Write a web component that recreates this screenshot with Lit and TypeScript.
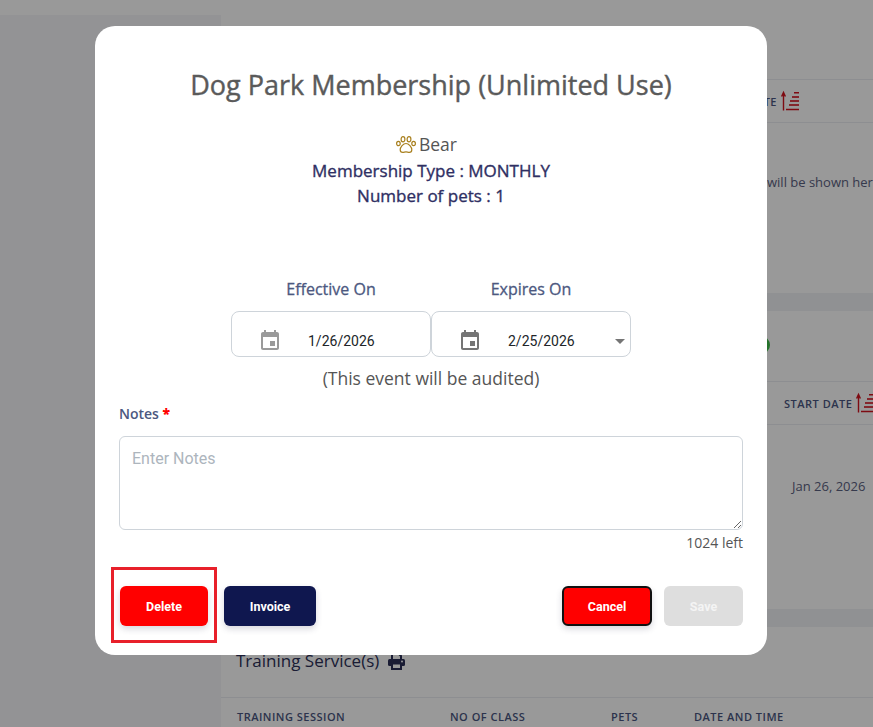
import { LitElement, html, css } from 'lit';
import { customElement } from 'lit/decorators.js';

const calendarPath =
  'M17 12h-5v5h5v-5zM16 1v2H8V1H6v2H5c-1.11 0-1.99.9-1.99 2L3 19c0 1.1.89 2 2 2h14c1.1 0 2-.9 2-2V5c0-1.1-.9-2-2-2h-1V1h-2zm3 18H5V8h14v11z';

const sortIcon = html`
  <svg class="sort" viewBox="0 0 18 19" width="18" height="19" fill="none" stroke="#d3131f">
    <path d="M1.5 18.500V1M-.4 4.500 1.500.5l1.900 4" stroke-width="1.400" />
    <path d="M12 .7h5M4 17.500h13" stroke-width="1.400" />
    <path d="M10 5h7M8 9h9M7 13h10" stroke-width="1.800" stroke-opacity=".8" />
  </svg>
`;

@customElement('app-root')
export class AppRoot extends LitElement {
  static styles = css`
    :host {
      display: block;
      position: relative;
      width: 873px;
      height: 727px;
      overflow: hidden;
      background: #fff;
      font-family: 'Open Sans', sans-serif;
    }

    /* page behind the dialog */
    .page {
      display: flex;
      height: 712px;
      margin-top: 15px;
    }

    .sidebar {
      width: 221px;
      flex: none;
      background: #f6f6f8;
    }

    .main {
      flex: 1;
      min-width: 0;
      background: #f0f2f5;
      overflow: hidden;
    }

    .card {
      background: #fff;
    }

    .card-one {
      height: 278px;
      padding-top: 64px;
      box-sizing: border-box;
    }

    .card-two {
      height: 298px;
      margin-top: 18px;
      padding-top: 70px;
      box-sizing: border-box;
      position: relative;
    }

    .card-three {
      height: 120px;
      margin-top: 18px;
    }

    .head-row {
      display: flex;
      align-items: center;
      height: 42px;
      border-top: 1px solid #ebedf2;
      border-bottom: 1px solid #ebedf2;
      background: #fff;
      font-size: 11px;
      font-weight: 600;
      letter-spacing: 0.5px;
      color: #4a5680;
      white-space: nowrap;
    }

    .head-row.one {
      justify-content: flex-end;
      padding-right: 73px;
      gap: 5px;
    }

    .head-row.two {
      padding-left: 563px;
      gap: 5px;
    }

    .sort {
      flex: none;
      overflow: visible;
    }

    .empty {
      margin: 50px 0 0 546px;
      font-size: 13px;
      color: #5b6180;
      white-space: nowrap;
    }

    .status-dot {
      position: absolute;
      left: 531px;
      top: 25px;
      width: 18px;
      height: 18px;
      border-radius: 50%;
      background: #3fbf4a;
    }

    .cell-date {
      margin: 52px 0 0 571px;
      font-size: 13px;
      color: #5b6180;
      white-space: nowrap;
    }

    .section-title {
      display: flex;
      align-items: center;
      gap: 9px;
      height: 71px;
      box-sizing: border-box;
      padding: 0 0 4px 15px;
      border-bottom: 1px solid #ebedf2;
      font-size: 17px;
      color: #2c3058;
    }

    .section-title svg {
      margin-top: 3px;
    }

    .train-row {
      display: flex;
      align-items: center;
      height: 37px;
      padding-left: 16px;
      font-size: 11px;
      font-weight: 600;
      letter-spacing: 0.5px;
      color: #4a5680;
      white-space: nowrap;
    }

    .train-row span:nth-child(1) {
      width: 213px;
    }

    .train-row span:nth-child(2) {
      width: 161px;
    }

    .train-row span:nth-child(3) {
      width: 83px;
    }

    /* dialog */
    .backdrop {
      position: absolute;
      inset: 0;
      background: rgba(0, 0, 0, 0.4);
    }

    .modal {
      position: absolute;
      left: 95px;
      top: 26px;
      width: 672px;
      height: 629px;
      box-sizing: border-box;
      padding: 39px 24px 0;
      background: #fff;
      border-radius: 20px;
    }

    h2 {
      margin: 0;
      font-size: 27px;
      line-height: 40px;
      font-weight: 400;
      -webkit-text-stroke: 0.4px #5a5a5a;
      color: #5a5a5a;
      text-align: center;
    }

    .pet {
      display: flex;
      justify-content: center;
      align-items: center;
      gap: 3px;
      margin-top: 26px;
      height: 26px;
      padding-right: 9px;
      font-size: 17.500px;
      color: #555;
    }

    .info {
      font-size: 17px;
      line-height: 25px;
      font-weight: 400;
      -webkit-text-stroke: 0.35px #2f2f63;
      color: #2f2f63;
      text-align: center;
    }

    .info.first {
      margin-top: 1px;
    }

    .dates {
      display: flex;
      justify-content: center;
      margin-top: 70px;
    }

    .date-field {
      width: 200px;
    }

    .date-label {
      font-size: 16px;
      line-height: 22px;
      font-weight: 400;
      -webkit-text-stroke: 0.3px #4c5880;
      color: #4c5880;
      text-align: center;
      margin-bottom: 11px;
    }

    .date-box {
      display: flex;
      align-items: flex-end;
      position: relative;
      height: 46px;
      box-sizing: border-box;
      padding: 0 0 3px 26px;
      border: 1px solid #ced4da;
      border-radius: 8px;
      font-family: Roboto, sans-serif;
      font-size: 14px;
      color: #212529;
    }

    .date-box span {
      margin: 0 0 4px 26px;
    }

    .caret {
      position: absolute;
      right: 5px;
      top: 27px;
      width: 0;
      height: 0;
      border-left: 5.500px solid transparent;
      border-right: 5.500px solid transparent;
      border-top: 5px solid #757575;
    }

    .audit {
      margin-top: 10px;
      font-size: 17.500px;
      line-height: 22px;
      color: #555;
      text-align: center;
    }

    .notes-label {
      margin-top: 15px;
      font-size: 14px;
      line-height: 20px;
      font-weight: 600;
      color: #4c5880;
    }

    .notes-label b {
      color: #f00;
    }

    textarea {
      display: block;
      box-sizing: border-box;
      width: 624px;
      height: 94px;
      margin-top: 12px;
      padding: 12px 12px;
      border: 1px solid #ced4da;
      border-radius: 6px;
      outline: none;
      font-family: Roboto, sans-serif;
      font-size: 16px;
    }

    textarea::placeholder {
      color: #adb5bd;
    }

    .left {
      margin-top: 3px;
      font-size: 14px;
      line-height: 20px;
      color: #555;
      text-align: right;
    }

    .actions {
      display: flex;
      align-items: center;
      margin-top: 33px;
      padding-left: 1px;
    }

    .actions button {
      height: 40px;
      box-sizing: border-box;
      border: none;
      border-radius: 6px;
      font-family: Roboto, sans-serif;
      font-size: 12.500px;
      font-weight: 700;
      color: #fff;
      box-shadow: 0 3px 6px rgba(60, 60, 90, 0.2);
    }

    .delete-wrap {
      position: relative;
      margin-right: 16px;
    }

    .delete {
      display: block;
      width: 88px;
      background: #f00;
    }

    .highlight {
      position: absolute;
      left: -9px;
      top: -19px;
      width: 106px;
      height: 76px;
      box-sizing: border-box;
      border: 3px solid #e8202a;
      pointer-events: none;
    }

    .invoice {
      width: 92px;
      background: #0f174f;
    }

    .cancel {
      width: 90px;
      margin-left: auto;
      background: #f00;
      border: 2px solid #111 !important;
    }

    .actions .save {
      width: 79px;
      margin-left: 12px;
      background: #dedede;
      color: #f4f4f4;
      box-shadow: none;
    }
  `;

  private _calendar(color: string) {
    return html`
      <svg viewBox="0 0 24 24" width="24" height="24" fill=${color}>
        <path d=${calendarPath} />
      </svg>
    `;
  }

  render() {
    return html`
      <div class="page">
        <div class="sidebar"></div>
        <div class="main">
          <div class="card card-one">
            <div class="head-row one">DATE ${sortIcon}</div>
            <div class="empty">will be shown here</div>
          </div>
          <div class="card card-two">
            <div class="status-dot"></div>
            <div class="head-row two">START DATE ${sortIcon}</div>
            <div class="cell-date">Jan 26, 2026</div>
          </div>
          <div class="card card-three">
            <div class="section-title">
              Training Service(s)
              <svg viewBox="0 0 17 17" width="17" height="17">
                <path d="M4 7V1h7l2 2v4" fill="none" stroke="#2c3058" stroke-width="2" />
                <rect y="6" width="17" height="7" rx="1.500" fill="#2c3058" />
                <rect x="4" y="10.500" width="9" height="5.500" fill="#fff" stroke="#2c3058" stroke-width="2" />
                <circle cx="14" cy="8.500" r="1" fill="#fff" />
              </svg>
            </div>
            <div class="train-row">
              <span>TRAINING SESSION</span><span>NO OF CLASS</span><span>PETS</span
              ><span>DATE AND TIME</span>
            </div>
          </div>
        </div>
      </div>

      <div class="backdrop"></div>

      <div class="modal">
        <h2>Dog Park Membership (Unlimited Use)</h2>
        <div class="pet">
          <svg viewBox="0 0 20 17" width="20" height="17" fill="none" stroke="#a9801f" stroke-width="1.200">
            <ellipse cx="2.400" cy="7.500" rx="1.800" ry="2.200" />
            <ellipse cx="7" cy="3.200" rx="1.900" ry="2.600" />
            <ellipse cx="13" cy="3.200" rx="1.900" ry="2.600" />
            <ellipse cx="17.600" cy="7.500" rx="1.800" ry="2.200" />
            <path
              d="M10 7.500c-2.800 0-5.800 3.600-5.800 6.300 0 1.600 1.100 2.600 2.500 2.600 1.300 0 2.100-.6 3.300-.6s2 .6 3.300.6c1.400 0 2.500-1 2.500-2.600 0-2.700-3-6.300-5.800-6.300z"
            />
          </svg>
          Bear
        </div>
        <div class="info first">Membership Type : MONTHLY</div>
        <div class="info">Number of pets : 1</div>

        <div class="dates">
          <div class="date-field">
            <div class="date-label">Effective On</div>
            <div class="date-box">${this._calendar('#9a9a9a')}<span>1/26/2026</span></div>
          </div>
          <div class="date-field">
            <div class="date-label">Expires On</div>
            <div class="date-box">
              ${this._calendar('#757575')}<span>2/25/2026</span>
              <i class="caret"></i>
            </div>
          </div>
        </div>
        <div class="audit">(This event will be audited)</div>

        <div class="notes-label">Notes <b>*</b></div>
        <textarea placeholder="Enter Notes"></textarea>
        <div class="left">1024 left</div>

        <div class="actions">
          <div class="delete-wrap">
            <button class="delete">Delete</button>
            <div class="highlight"></div>
          </div>
          <button class="invoice">Invoice</button>
          <button class="cancel">Cancel</button>
          <button class="save">Save</button>
        </div>
      </div>
    `;
  }
}

declare global {
  interface HTMLElementTagNameMap {
    'app-root': AppRoot;
  }
}
